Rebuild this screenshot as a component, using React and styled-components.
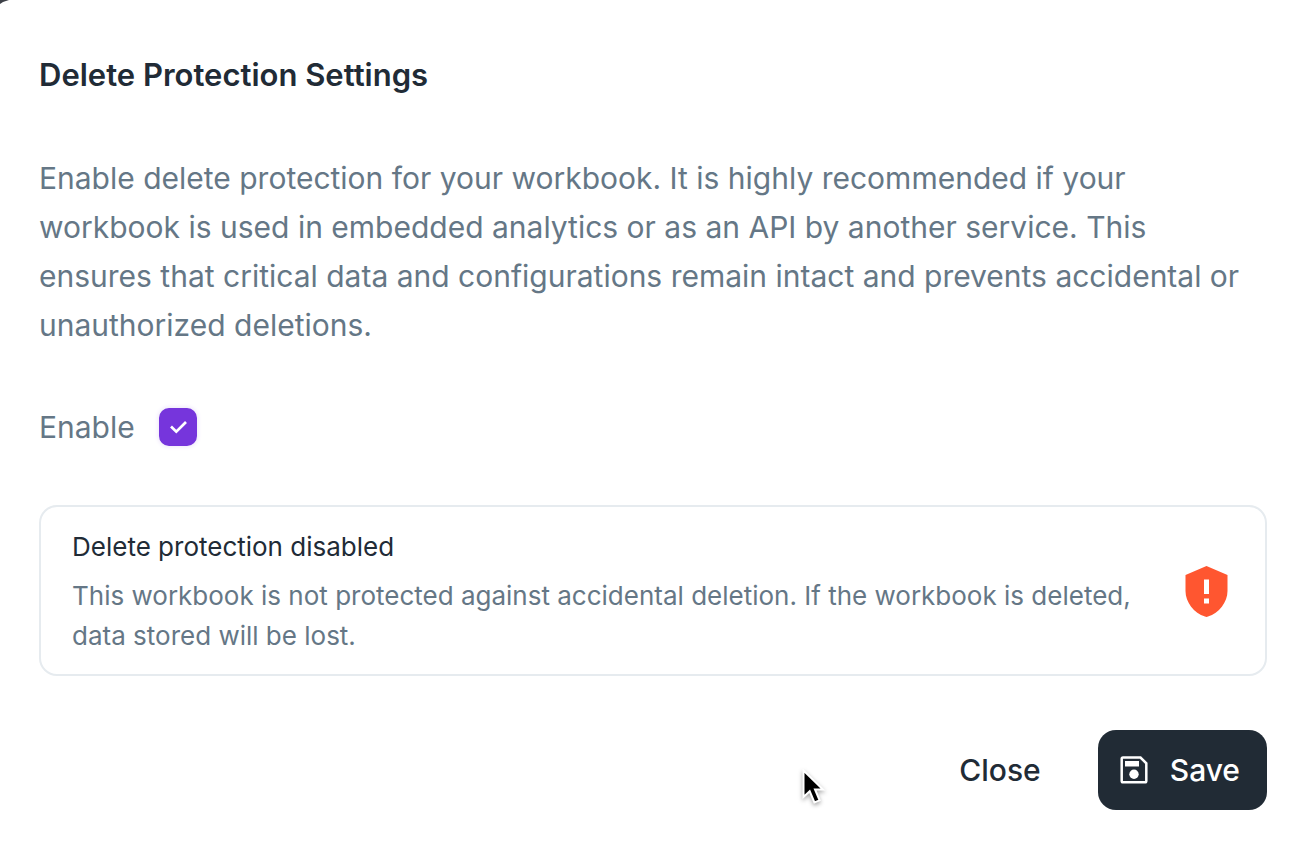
import React, { useState } from "react";
import styled, { createGlobalStyle } from "styled-components";

const GlobalStyle = createGlobalStyle`
  * { box-sizing: border-box; }
  body { margin: 0; background: #3d4148; }
  body, button, input { font-family: "Inter", "Liberation Sans", sans-serif; }
`;

const Dialog = styled.main`
  position: relative;
  min-height: 100vh;
  padding: 51px 27px 46px 39px;
  background: #ffffff;
  clip-path: polygon(9px 0, 100% 0, 100% 100%, 0 100%, 0 4px, 3px 2px);
  color: #212b36;
`;

const Title = styled.h1`
  margin: 0 0 55px;
  font-size: 31px;
  line-height: 48px;
  font-weight: 600;
`;

const Description = styled.p`
  margin: 0 0 58px;
  font-size: 30px;
  line-height: 49px;
  color: #657786;
`;

const CheckRow = styled.label`
  display: flex;
  align-items: center;
  gap: 24px;
  width: max-content;
  height: 38px;
  margin-bottom: 59px;
  font-size: 30px;
  line-height: 38px;
  color: #657786;
`;

const CheckFrame = styled.span`
  display: grid;
  width: 38px;
  height: 38px;

  > * { grid-area: 1 / 1; }
  > svg { pointer-events: none; }
`;

const Checkbox = styled.input`
  appearance: none;
  width: 38px;
  height: 38px;
  margin: 0;
  border: 2px solid #7635dc;
  border-radius: 10px;
  box-shadow: 0 0 4px 1px #eee6fb;

  &:checked { background: #7635dc; }
`;

const Card = styled.section`
  display: flex;
  align-items: center;
  justify-content: space-between;
  gap: 40px;
  margin-bottom: 54px;
  padding: 20px 37px 18px 31px;
  border: 2px solid #e6ebef;
  border-radius: 18px;
`;

const CardTitle = styled.h2`
  margin: 0 0 9px;
  font-size: 26px;
  line-height: 40px;
  font-weight: 400;
`;

const CardText = styled.p`
  margin: 0;
  font-size: 26px;
  line-height: 40px;
  color: #657786;
`;

const ShieldIcon = styled.svg`
  flex: none;
  width: 43px;
  height: 52px;
`;

const Actions = styled.footer`
  display: flex;
  justify-content: flex-end;
  gap: 30px;
`;

const Button = styled.button`
  display: flex;
  align-items: center;
  gap: 22px;
  height: 80px;
  padding: 0 27px;
  border: 0;
  border-radius: 18px;
  background: ${(p) => (p.$solid ? "#212b35" : "transparent")};
  color: ${(p) => (p.$solid ? "#ffffff" : "#212b36")};
  font-size: 30px;
  line-height: 48px;
  font-weight: 500;
  cursor: pointer;

  > svg { margin-left: -5px; }
`;

const Pointer = styled.svg`
  position: absolute;
  left: 800px;
  top: 769px;
  pointer-events: none;
  filter: drop-shadow(0 2px 2px rgba(0, 0, 0, 0.35));
`;

export default function App() {
  const [enabled, setEnabled] = useState(true);
  return (
    <>
      <GlobalStyle />
      <Dialog>
        <Title>Delete Protection Settings</Title>
        <Description>
          Enable delete protection for your workbook. It is highly recommended if your workbook is
          used in embedded analytics or as an API by another service. This ensures that critical
          data and configurations remain intact and prevents accidental or unauthorized deletions.
        </Description>
        <CheckRow htmlFor="enable">
          Enable
          <CheckFrame>
            <Checkbox
              id="enable"
              type="checkbox"
              checked={enabled}
              onChange={(e) => setEnabled(e.target.checked)}
            />
            {enabled && (
              <svg width="38" height="38" viewBox="0 0 38 38" fill="none" aria-hidden="true">
                <path d="M12 18.500l5.300 5.200 9.700-9.700" stroke="#fff" strokeWidth="2.700" />
              </svg>
            )}
          </CheckFrame>
        </CheckRow>
        <Card>
          <div>
            <CardTitle>Delete protection disabled</CardTitle>
            <CardText>
              This workbook is not protected against accidental deletion. If the workbook is
              deleted, data stored will be lost.
            </CardText>
          </div>
          <ShieldIcon viewBox="0 0 43 52" aria-hidden="true">
            <path
              d="M21.500 0L42.500 9v16C42.500 36 34 47.500 23 50.600Q21.500 51.200 20 50.600C9 47.500 .5 36 .5 25V9z"
              fill="#ff5630"
            />
            <path d="M19 13.500h5V28h-5zM19 32.500h5v5h-5z" fill="#fff" />
          </ShieldIcon>
        </Card>
        <Actions>
          <Button type="button">Close</Button>
          <Button type="button" $solid>
            <svg width="28" height="28" viewBox="0 0 28 28" fill="none" aria-hidden="true">
              <path
                d="M3 1.500H20.500L26.300 7.300V25q0 1.300-1.300 1.300H3q-1.300 0-1.300-1.300V2.800q0-1.300 1.300-1.300z"
                stroke="#fff"
                strokeWidth="2.500"
              />
              <path d="M5 5h14v5.500H5z" fill="#fff" />
              <circle cx="14" cy="18.300" r="4.700" fill="#fff" />
            </svg>
            Save
          </Button>
        </Actions>
        <Pointer width="26" height="38" viewBox="0 0 26 38" aria-hidden="true">
          <path
            d="M3.500 1.500v26.500l6.200-5.700 4.700 11.200 5.200-2.200-4.600-10.800h8z"
            fill="#000"
            stroke="#fff"
            strokeWidth="2"
          />
        </Pointer>
      </Dialog>
    </>
  );
}
